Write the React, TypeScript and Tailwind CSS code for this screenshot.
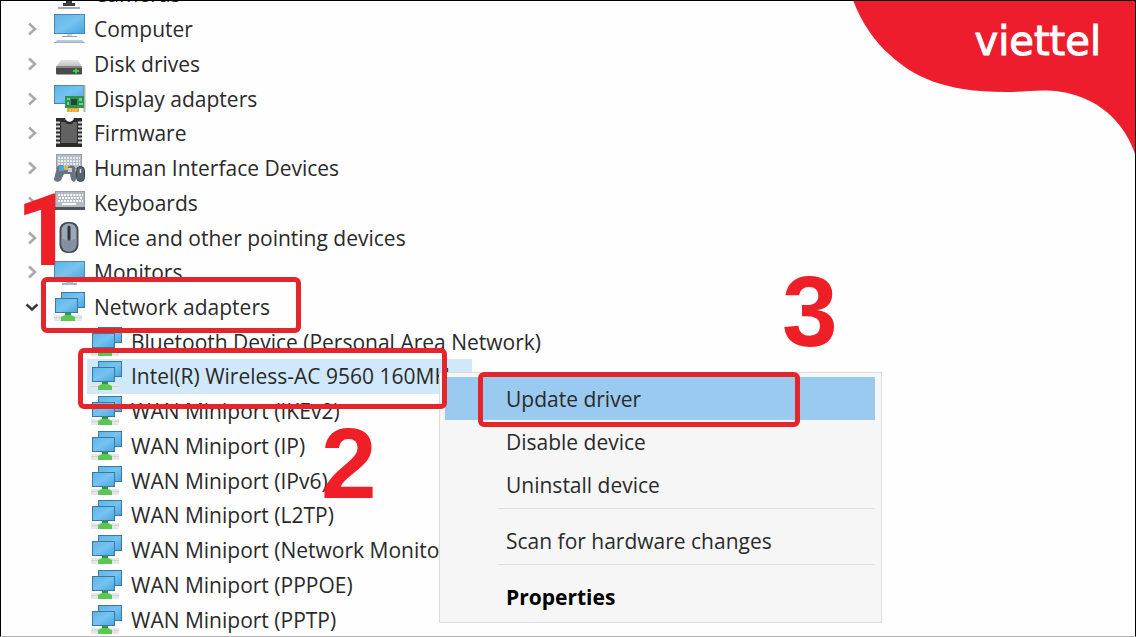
import { useState } from 'react';
import type { ReactNode } from 'react';

type IconName =
  | 'camera'
  | 'computer'
  | 'disk'
  | 'display'
  | 'firmware'
  | 'hid'
  | 'keyboard'
  | 'mouse'
  | 'monitor'
  | 'network';

const categories: { label: string; icon: IconName }[] = [
  { label: 'Cameras', icon: 'camera' },
  { label: 'Computer', icon: 'computer' },
  { label: 'Disk drives', icon: 'disk' },
  { label: 'Display adapters', icon: 'display' },
  { label: 'Firmware', icon: 'firmware' },
  { label: 'Human Interface Devices', icon: 'hid' },
  { label: 'Keyboards', icon: 'keyboard' },
  { label: 'Mice and other pointing devices', icon: 'mouse' },
  { label: 'Monitors', icon: 'monitor' },
  { label: 'Network adapters', icon: 'network' },
];

const adapters = [
  'Bluetooth Device (Personal Area Network)',
  'Intel(R) Wireless-AC 9560 160MHz',
  'WAN Miniport (IKEv2)',
  'WAN Miniport (IP)',
  'WAN Miniport (IPv6)',
  'WAN Miniport (L2TP)',
  'WAN Miniport (Network Monitor)',
  'WAN Miniport (PPPOE)',
  'WAN Miniport (PPTP)',
];

const drawings: Record<IconName, ReactNode> = {
  camera: (
    <>
      <circle cx="16" cy="10" r="9" fill="#8a8d91" />
      <path d="M13 18h6v7h3v3H10v-3h3z" fill="#3c3e41" />
      <path d="M5 29h22v2H5z" fill="#a5a8ac" />
    </>
  ),
  computer: (
    <>
      <rect x="1.5" y="1.5" width="30" height="19" fill="url(#screen)" stroke="#4a87b3" />
      <path d="M14 21h5v2h-5z" fill="#c9d6e2" />
      <path d="M9 23h15v1H9z" fill="#8fa3b8" />
      <path d="M4 27h25l3 3H1z" fill="#b9c7d8" />
      <path d="M1 29h31v1H1z" fill="#9fb0c4" />
    </>
  ),
  disk: (
    <>
      <path d="M8 12h17l4 7H3z" fill="url(#metal)" />
      <rect x="3" y="18.5" width="26" height="8" rx="1" fill="#4b4b4b" />
      <path d="M3 19h26v1H3z" fill="#858585" />
      <path d="M20 22h6v2h-6zM22 20.5h2v5h-2z" fill="#35d23c" />
    </>
  ),
  display: (
    <>
      <rect x="1.5" y="2.5" width="29" height="18" fill="url(#screen)" stroke="#4a87b3" />
      <path d="M30.5 2h2v27h-2z" fill="#aab8a8" />
      <rect x="12" y="13" width="19" height="12" fill="#2f9155" />
      <path d="M14 15h3v2h-3zM14 19h2v3h-2zM26 15h3v3h-3zM26 20h4v2h-4z" fill="#7cc886" />
      <rect x="18" y="16" width="6" height="6" fill="#1c4b34" />
      <path d="M14 25h12v4H14z" fill="#eaa52a" />
      <path d="M17 26v3M20 26v3M23 26v3" stroke="#f6cf78" />
    </>
  ),
  firmware: (
    <>
      <path d="M3 1h9c1 5 8 5 9 0h8v29H3z" fill="#2b2b2b" />
      <path d="M8 5h4c2 3 7 3 9 0h3v21H8z" fill="#626262" />
      <path
        d="M3 5.5h4M3 9.5h4M3 13.5h4M3 17.5h4M3 21.5h4M3 25.5h4M25 5.5h4M25 9.5h4M25 13.5h4M25 17.5h4M25 21.5h4M25 25.5h4"
        stroke="#d8d8d8"
        strokeWidth="2"
      />
    </>
  ),
  hid: (
    <>
      <rect x="3.5" y="2.5" width="25" height="14" fill="#b7bec6" stroke="#98a0a9" />
      <path d="M5 6h22M5 9h22M5 12h22" stroke="#f4f6f8" strokeWidth="1.5" strokeDasharray="2 1" />
      <path
        d="M4 15c3-3 6-2 8 0h3c2-2 5-2 7 0l1 6v6c-1 4-4 3-5 0l-1-5h-6l-3 6c-2 3-7 2-7-1z"
        fill="#6b747e"
      />
      <path d="M6 14h5v5H6z" fill="#4aa5dd" />
      <path d="M11 14h4v4h-4z" fill="#e8b54a" />
      <path d="M15 16h4v4h-4z" fill="#c3ccd4" />
      <rect x="23.5" y="14.5" width="8" height="15" rx="4" fill="#5a646e" stroke="#3b434b" />
      <path d="M27.5 17v4" stroke="#d3dae0" strokeWidth="1.5" />
    </>
  ),
  keyboard: (
    <>
      <rect x="2.5" y="4.5" width="29" height="18" fill="#b4bac1" stroke="#9aa1a9" />
      <path d="M5 8h25M6 11h24M5 14h25" stroke="#f7f8f9" strokeWidth="2" strokeDasharray="2 1" />
      <path d="M9 17h14" stroke="#f7f8f9" strokeWidth="2" />
      <path d="M2 20h30v3H2z" fill="#50555b" />
    </>
  ),
  mouse: (
    <>
      <rect x="6.5" y="0" width="19" height="31" rx="8" fill="#454c55" />
      <rect x="8.5" y="1.5" width="15" height="28" rx="7" fill="#9ba8b6" />
      <path d="M8.5 16c4 3 11 3 15 0v6a7 7 0 0 1-15 0z" fill="#8591a0" />
      <path d="M16 5v12" stroke="#2e343b" strokeWidth="3" strokeLinecap="round" />
    </>
  ),
  monitor: (
    <>
      <rect x="1.5" y="5.5" width="30" height="19" fill="url(#screen)" stroke="#4a87b3" />
      <path d="M13 25h7v2h-7zM9 27h15v2H9z" fill="#a9b5c2" />
    </>
  ),
  network: (
    <>
      <path d="M1 24h28v6H1z" fill="#e6e7e7" />
      <path d="M1 26.5h28" stroke="#d0d3d3" />
      <path d="M12 22h6v2l4 2v4H8v-4l4-2z" fill="#5cc655" />
      <path d="M12 22h6v2h-6z" fill="#2f9a3c" />
      <rect x="8.5" y="1.5" width="23" height="15" fill="url(#screen)" stroke="#3b78a6" />
      <rect x="2.5" y="7.5" width="22" height="14" fill="url(#screen)" stroke="#3b78a6" />
    </>
  ),
};

function DeviceIcon({ name }: { name: IconName }) {
  return (
    <svg viewBox="0 0 33 32" className="h-8 w-[33px] shrink-0" aria-hidden="true">
      {drawings[name]}
    </svg>
  );
}

function Chevron({ open }: { open: boolean }) {
  return (
    <svg viewBox="0 0 20 20" className="h-5 w-5 shrink-0" fill="none" aria-hidden="true">
      {open ? (
        <path d="M4.5 7.5l5.5 5 5.5-5" stroke="#3a3a3a" strokeWidth="2.5" />
      ) : (
        <path d="M7 4.5l6 5.5-6 5.5" stroke="#a8a8a8" strokeWidth="2.5" />
      )}
    </svg>
  );
}

function MenuItem({ children, active, bold }: { children: string; active?: boolean; bold?: boolean }) {
  return (
    <button
      type="button"
      role="menuitem"
      className={`flex h-[43px] w-full items-center pl-[61px] text-left ${active ? 'bg-[#9acaef]' : ''} ${
        bold ? 'font-bold text-black' : ''
      }`}
    >
      {children}
    </button>
  );
}

function Divider() {
  return <div role="separator" className="mt-0.5 mb-2.5 ml-[53px] h-px bg-[#dedede]" />;
}

export default function App() {
  const [selected, setSelected] = useState('Intel(R) Wireless-AC 9560 160MHz');

  return (
    <main className="relative h-screen overflow-hidden border border-black border-b-[#b5b5b5] bg-[#fefefe] font-['Open_Sans','Noto_Sans',sans-serif] text-[21px] leading-7 text-[#2a2a2a]">
      <svg className="absolute h-0 w-0" aria-hidden="true">
        <defs>
          <linearGradient id="screen" x1="0" y1="0" x2="1" y2="1">
            <stop offset="0" stopColor="#5fb4e6" />
            <stop offset="0.5" stopColor="#76c3f0" />
            <stop offset="1" stopColor="#48a5df" />
          </linearGradient>
          <linearGradient id="metal" x1="0" y1="0" x2="0" y2="1">
            <stop offset="0" stopColor="#e4e4e4" />
            <stop offset="1" stopColor="#bdbdbd" />
          </linearGradient>
        </defs>
      </svg>

      {/* device tree, scrolled a little past the first row */}
      <ul className="-mt-6 grid h-[660px] auto-rows-fr">
        {categories.map((c) => (
          <li key={c.label} className="flex">
            <button type="button" className="flex items-center pl-[21px] whitespace-nowrap">
              <Chevron open={c.icon === 'network'} />
              <span className="ml-[11px] flex items-center gap-2">
                <DeviceIcon name={c.icon} />
                {c.label}
              </span>
            </button>
          </li>
        ))}
        {adapters.map((name) => (
          <li key={name} className="flex pl-[86px]">
            <button
              type="button"
              onClick={() => setSelected(name)}
              className={`flex items-center gap-2 pr-3 pl-[3px] whitespace-nowrap ${
                selected === name ? 'bg-[#cfe8fa]' : ''
              }`}
            >
              <DeviceIcon name="network" />
              {name}
            </button>
          </li>
        ))}
      </ul>

      {/* context menu */}
      <div
        role="menu"
        className="absolute top-[371px] left-[438px] w-[443px] border border-[#dcdcdc] bg-[#f6f6f6] py-1 pr-[6px] pl-[5px]"
      >
        <MenuItem active>Update driver</MenuItem>
        <MenuItem>Disable device</MenuItem>
        <MenuItem>Uninstall device</MenuItem>
        <Divider />
        <MenuItem>Scan for hardware changes</MenuItem>
        <Divider />
        <MenuItem bold>Properties</MenuItem>
      </div>

      {/* step markers */}
      <div className="absolute top-[276px] left-10 h-14 w-[260px] rounded-md border-[5px] border-[#e4252b]" />
      <div className="absolute top-[347px] left-[77px] h-[61px] w-[369px] rounded-md border-[5px] border-[#e4252b]" />
      <div className="absolute top-[371px] left-[477px] h-[55px] w-[322px] rounded-md border-[5px] border-[#e4252b]" />
      <div className="font-['Liberation_Sans',sans-serif] text-[100px] leading-[100px] font-bold text-[#ee1f27]">
        <span className="absolute top-[180px] left-[15px] font-['Roboto',sans-serif]">1</span>
        <span className="absolute top-[412px] left-[320px]">2</span>
        <span className="absolute top-[260px] left-[781px]">3</span>
      </div>

      {/* brand corner */}
      <div className="absolute -top-px -right-px h-[158px] w-[283px]">
        <svg viewBox="0 0 283 158" className="h-full w-full" aria-hidden="true">
          <path
            d="M0 0C8 22 22 42 37 55C60 76 90 92 153 92C170 92 180 90 195 90.5C250 93 275 130 283 157V0Z"
            fill="#ee1d2e"
          />
        </svg>
        <span className="absolute top-5 right-[35px] font-['DejaVu_Sans',sans-serif] text-[40px] leading-[42px] text-white [-webkit-text-stroke:1px_white]">
          viettel
        </span>
      </div>
    </main>
  );
}
